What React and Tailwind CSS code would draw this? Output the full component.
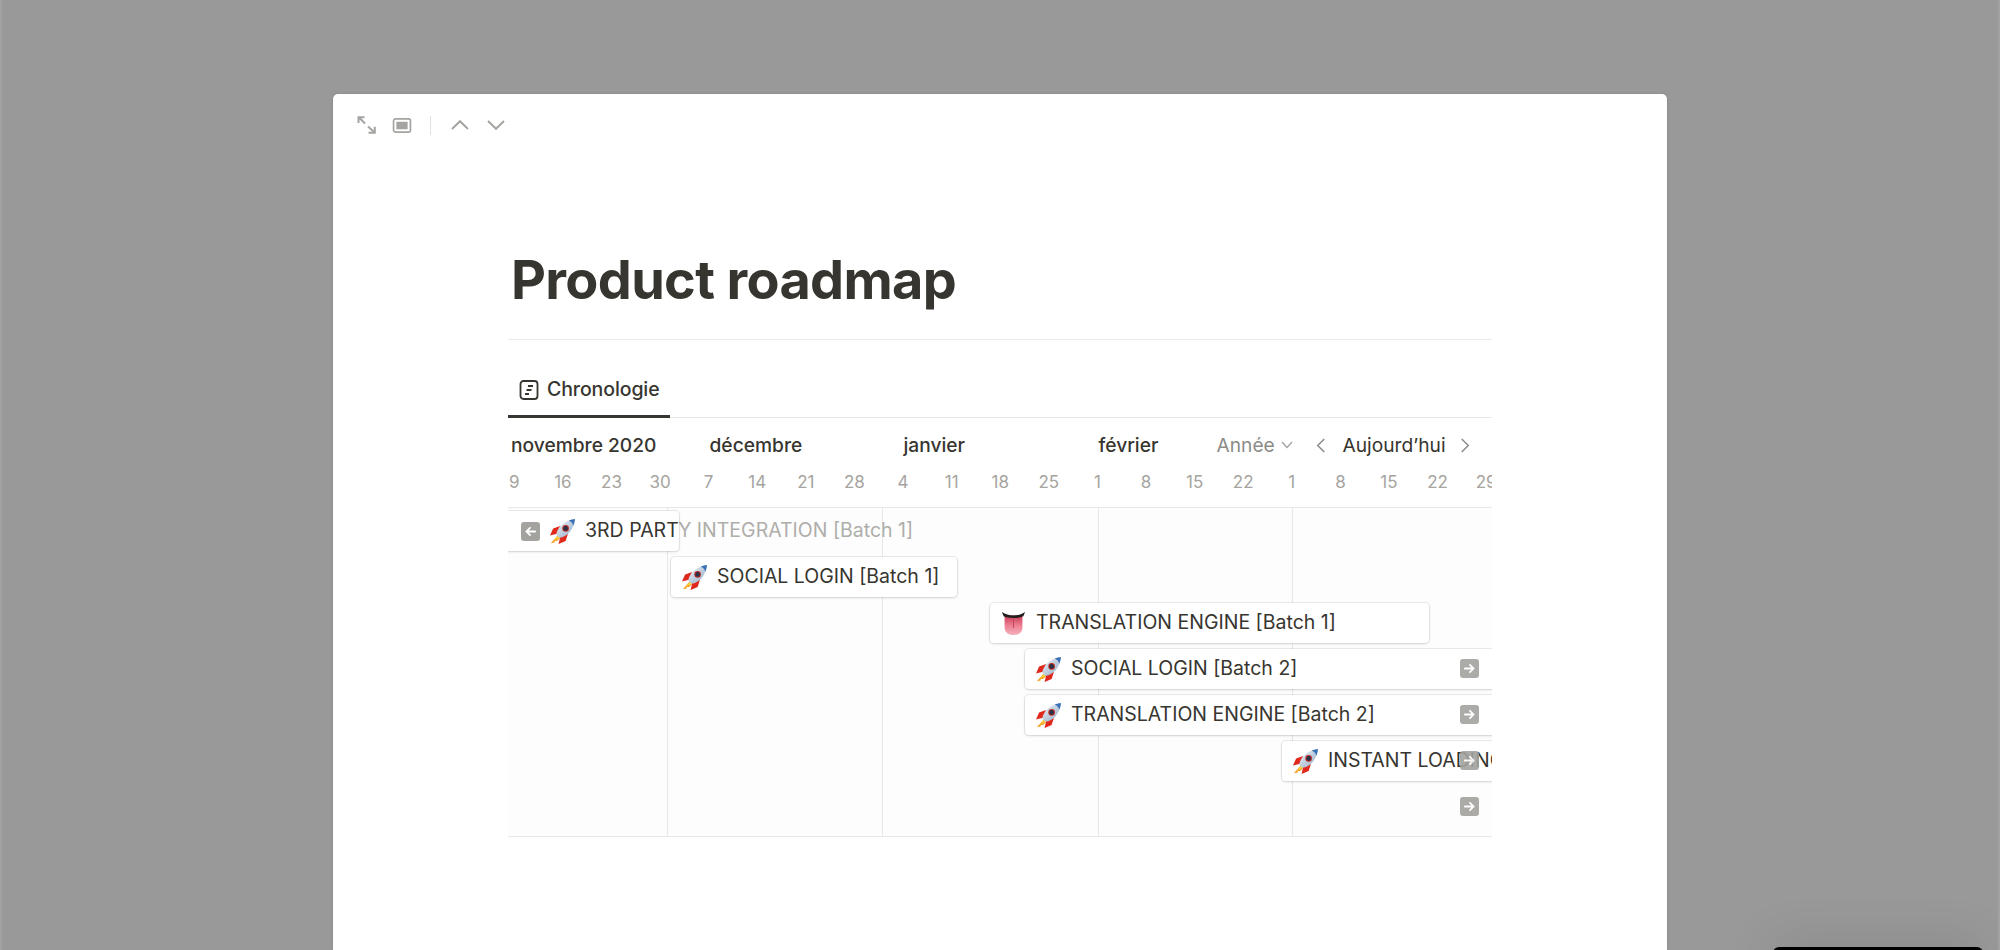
const font = { fontFamily: 'Inter, "Liberation Sans", sans-serif' };

function Rocket() {
  return (
    <svg viewBox="0 0 32 32" className="w-[25px] h-[25px] shrink-0">
      <defs>
        <linearGradient id="rb" x1="0" y1="0" x2="1" y2="1">
          <stop offset="0" stopColor="#f2f6fa" />
          <stop offset="1" stopColor="#8fa8c4" />
        </linearGradient>
      </defs>
      <path d="M12 19 L1 31 L6 30 L6 28 L9 28 L14 23 Z" fill="#f59e1c" />
      <path d="M11 21 L5 28 L13 23 Z" fill="#fde047" />
      <path d="M13 9 L4 12 L0 21 L9 19 Z" fill="#e0281c" />
      <path d="M23 19 L20 28 L11 32 L13 23 Z" fill="#e0281c" />
      <path d="M8 20 C9 11 18 2 32 0 C30 14 22 23 12 24 Z" fill="url(#rb)" />
      <path d="M24 2 C27 1 30 0.3 32 0 C31.6 3 31 6 30 8.5 C29 5.5 27 3.5 24 2 Z" fill="#3a70b5" />
      <circle cx="20" cy="12" r="4.2" fill="#c0291f" />
      <circle cx="20" cy="12" r="2.9" fill="#25324a" />
    </svg>
  );
}

function Tongue() {
  return (
    <svg viewBox="0 0 28 28" className="w-[25px] h-[25px] shrink-0">
      <defs>
        <linearGradient id="tg" x1="0" y1="0" x2="0" y2="1">
          <stop offset="0" stopColor="#c93a55" />
          <stop offset="0.5" stopColor="#ec7f92" />
          <stop offset="1" stopColor="#f7b0bb" />
        </linearGradient>
      </defs>
      <path d="M4 5 L4 18 C4 24 8 27 14 27 C20 27 24 24 24 18 L24 5 Z" fill="url(#tg)" />
      <path d="M14 10 L14 19" stroke="#c93a58" strokeWidth="1" fill="none" />
      <path d="M1 1 C5 3.5 9 5 14 5 C19 5 23 3.5 27 1 L25 6 C20 8.5 8 8.5 3 6 Z" fill="#221e1e" />
    </svg>
  );
}

function ArrowBox({ left, extra = "" }) {
  return (
    <div className={`w-[19px] h-[19px] rounded-[3px] bg-[#a3a29e] flex items-center justify-center shrink-0 ${extra}`}>
      <svg viewBox="0 0 14 14" className="w-[13px] h-[13px]" fill="none" stroke="white" strokeWidth="1.9" strokeLinecap="round" strokeLinejoin="round">
        {left ? <path d="M12 7 H2.5 M6.5 3 L2.5 7 L6.5 11" /> : <path d="M2 7 H11.5 M7.5 3 L11.5 7 L7.5 11" />}
      </svg>
    </div>
  );
}

const barCls =
  "h-10 shrink-0 bg-white rounded-[4px] shadow-[0_0_0_1px_rgba(15,15,15,0.07),0_1px_3px_rgba(15,15,15,0.12)] flex items-center overflow-hidden whitespace-nowrap text-[19.5px] text-[#37352f]";

function Row({ children }) {
  return <div className="relative h-[46px] pt-[3px] flex w-[984px]">{children}</div>;
}

const RightArrow = () => <ArrowBox extra="absolute right-[13px] top-[13px] opacity-90" />;

const days = [9, 16, 23, 30, 7, 14, 21, 28, 4, 11, 18, 25, 1, 8, 15, 22, 1, 8, 15, 22, 29];

export default function App() {
  return (
    <div className="h-[950px] w-full overflow-hidden bg-[#999999] relative border-x-2 border-[#a2a2a2]" style={font}>
      <div className="ml-[331px] mt-[94px] w-[1334px] h-[856px] bg-white rounded-t-[5px] inline-block align-top shadow-[0_0_3px_rgba(0,0,0,0.15)]">
        {/* topbar */}
        <div className="flex items-center h-[60px] pt-[2px] pl-[24px] text-[#a5a4a0]">
          <svg viewBox="0 0 19 18" className="w-[19px] h-[18px]" fill="none" stroke="#a5a4a0" strokeWidth="2">
            <path d="M2.5 2 L8 7.5 M1.5 7 V1.2 H7.5 M11 10.5 L17 16 M11.5 16.8 H17.8 V10.8" />
          </svg>
          <svg viewBox="0 0 20 16" className="w-[20px] h-[15px] ml-[16px]">
            <rect x="1" y="1" width="18" height="14" rx="2" fill="none" stroke="#a5a4a0" strokeWidth="1.8" />
            <rect x="4" y="4" width="12" height="8" fill="#a5a4a0" />
          </svg>
          <div className="w-px h-[19px] bg-[#e3e2e0] ml-[18px]" />
          <svg viewBox="0 0 18 10" className="w-[18px] h-[10px] ml-[20px]" fill="none" stroke="#a5a4a0" strokeWidth="2">
            <path d="M1 9 L9 1.2 L17 9" />
          </svg>
          <svg viewBox="0 0 18 10" className="w-[18px] h-[10px] ml-[18px]" fill="none" stroke="#a5a4a0" strokeWidth="2">
            <path d="M1 1 L9 8.8 L17 1" />
          </svg>
        </div>

        <div className="pl-[175px] w-[1159px]">
          <div className="pl-[3px] pt-[93px] h-[185px] text-[54px] leading-[65px] font-bold tracking-[-0.67px] text-[#37352f]">
            Product roadmap
          </div>
          <div className="h-px bg-[#ebeae8]" />
          {/* tabs */}
          <div className="h-[78px] border-b border-[#e8e7e5] flex items-end">
            <div className="w-[162px] h-[48px] pb-[5px] border-b-[3px] border-[#37352f] flex items-center pl-[11px] mb-[-1px]">
              <svg viewBox="0 0 20 20" className="w-[20px] h-[20px]" fill="none" stroke="#37352f" strokeWidth="1.8">
                <rect x="1.5" y="1" width="17" height="18" rx="3" />
                <path d="M9 6 H14 M7.5 10 H12.5 M6 14 H10" />
              </svg>
              <span className="ml-[8px] text-[19.5px] font-medium text-[#37352f] tracking-[-0.1px]">Chronologie</span>
            </div>
          </div>

          {/* timeline header */}
          <div className="w-[984px] overflow-hidden">
            <div className="h-[54px] flex items-center whitespace-nowrap text-[19.2px] font-medium text-[#37352f]">
              <span className="w-[201.5px] pl-[3px] shrink-0">novembre 2020</span>
              <span className="w-[194px] shrink-0">décembre</span>
              <span className="w-[195px] shrink-0">janvier</span>
              <span className="w-[118px] shrink-0">février</span>
              <span className="font-normal text-[#8c8b87] w-[64px] shrink-0">Année</span>
              <svg viewBox="0 0 12 8" className="w-[12px] h-[8px] shrink-0" fill="none" stroke="#a5a4a0" strokeWidth="1.4">
                <path d="M1 1 L6 6.5 L11 1" />
              </svg>
              <svg viewBox="0 0 10 16" className="w-[10px] h-[15px] ml-[23px] shrink-0" fill="none" stroke="#8c8b87" strokeWidth="1.6">
                <path d="M8.5 1 L1.5 8 L8.5 15" />
              </svg>
              <span className="font-normal ml-[17px] w-[100px] shrink-0">Aujourd’hui</span>
              <svg viewBox="0 0 10 16" className="w-[10px] h-[15px] ml-[17px] shrink-0" fill="none" stroke="#8c8b87" strokeWidth="1.6">
                <path d="M1.5 1 L8.5 8 L1.5 15" />
              </svg>
            </div>
            <div className="h-[35px] flex items-start mt-[-3px] mb-[3px] text-[17px] leading-[26px] text-[#a5a4a0] ml-[-18px]">
              {days.map((d, i) => (
                <span key={i} className="w-[48.6px] text-center shrink-0">{d}</span>
              ))}
            </div>
          </div>

          {/* timeline body */}
          <div className="w-[984px] h-[330px] border-y border-[#e8e7e5] bg-[#fdfdfd] grid overflow-hidden">
            <div className="[grid-area:1/1] flex h-full">
              <div className="w-[160px] border-r border-[#e8e7e5]" />
              <div className="w-[215px] border-r border-[#e8e7e5]" />
              <div className="w-[216px] border-r border-[#e8e7e5]" />
              <div className="w-[194px] border-r border-[#e8e7e5]" />
            </div>
            <div className="[grid-area:1/1]">
              <Row>
                <span className="absolute left-[76px] top-[3px] h-10 flex items-center text-[19.5px] text-[#afaeaa] whitespace-nowrap">3RD PARTY INTEGRATION [Batch 1]</span>
                <div className={`${barCls} ml-[-10px] w-[181px] pl-[23px] relative`}>
                  <ArrowBox left />
                  <span className="ml-[10px]"><Rocket /></span>
                  <span className="ml-[10px]">3RD PARTY INTEGRATION [Batch 1]</span>
                </div>
              </Row>
              <Row>
                <div className={`${barCls} ml-[163px] w-[286px] pl-[11px]`}>
                  <Rocket />
                  <span className="ml-[10px]">SOCIAL LOGIN [Batch 1]</span>
                </div>
              </Row>
              <Row>
                <div className={`${barCls} ml-[482px] w-[439px] pl-[11px]`}>
                  <Tongue />
                  <span className="ml-[10px]">TRANSLATION ENGINE [Batch 1]</span>
                </div>
              </Row>
              <Row>
                <div className={`${barCls} ml-[517px] w-[600px] pl-[11px]`}>
                  <Rocket />
                  <span className="ml-[10px]">SOCIAL LOGIN [Batch 2]</span>
                </div>
                <RightArrow />
              </Row>
              <Row>
                <div className={`${barCls} ml-[517px] w-[600px] pl-[11px]`}>
                  <Rocket />
                  <span className="ml-[10px]">TRANSLATION ENGINE [Batch 2]</span>
                </div>
                <RightArrow />
              </Row>
              <Row>
                <div className={`${barCls} ml-[774px] w-[400px] pl-[11px]`}>
                  <Rocket />
                  <span className="ml-[10px]">INSTANT LOADING</span>
                </div>
                <RightArrow />
              </Row>
              <Row>
                <RightArrow />
              </Row>
            </div>
          </div>
        </div>
      </div>
      <div className="absolute left-[1771px] top-[947px] w-[210px] h-[20px] bg-black rounded-t-[6px] shadow-[0_0_50px_rgba(0,0,0,0.18)]" />
    </div>
  );
}
